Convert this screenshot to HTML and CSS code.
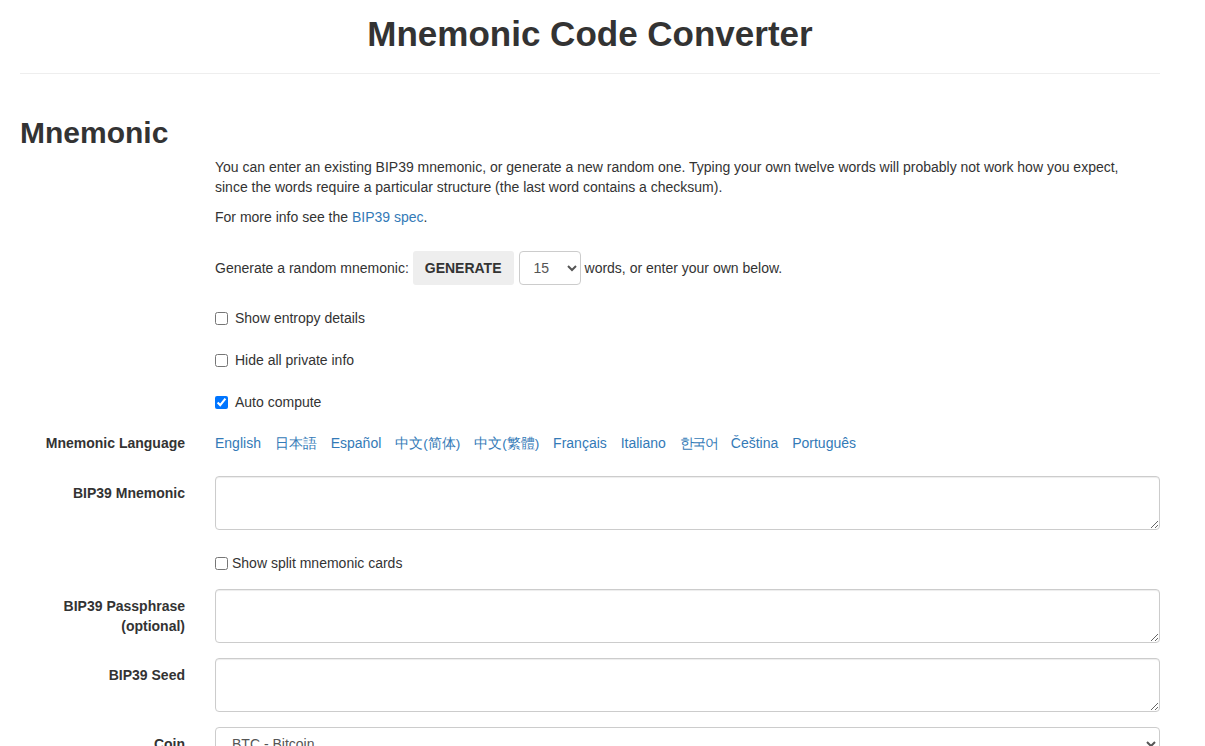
FILE: index.html
```html
<!DOCTYPE html>
<html lang="en">
<head>
  <meta charset="UTF-8" />
  <title>Mnemonic Code Converter</title>
  <link rel="stylesheet" href="styles.css">
</head>
<body>
  <div class="container">
    <h1 class="page-title">Mnemonic Code Converter</h1>
    <hr />

    <h2 class="section-title">Mnemonic</h2>

    <form class="form">
      <div class="row row-intro">
        <div class="col-label"></div>
        <div class="col-field">
          <p class="help">
            You can enter an existing BIP39 mnemonic, or generate a new random one. Typing your own twelve words will probably not work how you expect,<br />
            since the words require a particular structure (the last word contains a checksum).
          </p>
          <p class="help">For more info see the <a href="#">BIP39 spec</a>.</p>
        </div>
      </div>

      <div class="row row-generate">
        <div class="col-label"></div>
        <div class="col-field inline">
          <span>Generate a random mnemonic:</span>
          <button type="button" class="btn-generate">GENERATE</button>
          <select class="strength">
            <option>3</option>
            <option>6</option>
            <option>9</option>
            <option>12</option>
            <option selected>15</option>
            <option>18</option>
            <option>21</option>
            <option>24</option>
          </select>
          <span>words, or enter your own below.</span>
        </div>
      </div>

      <div class="row row-check first">
        <div class="col-label"></div>
        <label class="col-field check"><input type="checkbox" /> Show entropy details</label>
      </div>
      <div class="row row-check">
        <div class="col-label"></div>
        <label class="col-field check"><input type="checkbox" /> Hide all private info</label>
      </div>
      <div class="row row-check">
        <div class="col-label"></div>
        <label class="col-field check"><input type="checkbox" checked /> Auto compute</label>
      </div>

      <div class="row row-lang">
        <div class="col-label label">Mnemonic Language</div>
        <div class="col-field languages">
          <a href="#">English</a>
          <a href="#">日本語</a>
          <a href="#">Español</a>
          <a href="#" class="cjk">中文(简体)</a>
          <a href="#" class="cjk">中文(繁體)</a>
          <a href="#">Français</a>
          <a href="#">Italiano</a>
          <a href="#" class="ko">한국어</a>
          <a href="#">Čeština</a>
          <a href="#">Português</a>
        </div>
      </div>

      <div class="row row-field">
        <div class="col-label label padded">BIP39 Mnemonic</div>
        <div class="col-field"><textarea rows="2"></textarea></div>
      </div>

      <div class="row row-split">
        <div class="col-label"></div>
        <label class="col-field check tight"><input type="checkbox" /> Show split mnemonic cards</label>
      </div>

      <div class="row row-field pass">
        <div class="col-label label padded">BIP39 Passphrase (optional)</div>
        <div class="col-field"><textarea rows="2"></textarea></div>
      </div>

      <div class="row row-field">
        <div class="col-label label padded">BIP39 Seed</div>
        <div class="col-field"><textarea rows="2"></textarea></div>
      </div>

      <div class="row row-field">
        <div class="col-label label padded">Coin</div>
        <div class="col-field">
          <select class="coin">
            <option>BTC - Bitcoin</option>
            <option>BTC - Bitcoin Testnet</option>
            <option>ETH - Ethereum</option>
          </select>
        </div>
      </div>
    </form>
  </div>
</body>
</html>
```

FILE: styles.css
```css
body {
  margin: 0;
  font-family: 'Liberation Sans', Arial, sans-serif;
  font-size: 14px;
  line-height: 20px;
  color: #333;
  background: #fff;
}

a {
  color: #337ab7;
  text-decoration: none;
}

.container {
  width: 1140px;
  margin-left: 20px;
}

.page-title {
  margin: 14px 0 0;
  font-size: 35px;
  line-height: 40px;
  font-weight: 700;
  text-align: center;
}

hr {
  margin: 19px 0 0;
  border: 0;
  border-top: 1px solid #eee;
}

.section-title {
  margin: 42px 0 0;
  font-size: 30px;
  line-height: 33px;
  font-weight: 700;
}

.form {
  display: flex;
  flex-direction: column;
}

.row {
  display: flex;
}

.col-label {
  width: 165px;
  flex: none;
  margin-right: 30px;
  text-align: right;
}

.col-field {
  flex: 1;
  min-width: 0;
}

.label {
  font-weight: 700;
}

.padded {
  padding-top: 7px;
}

.help {
  margin: 0 0 10px;
}

.row-intro {
  margin-top: 8px;
}

.row-generate {
  margin-top: 14px;
}

.inline {
  display: flex;
  align-items: center;
  white-space: nowrap;
}

.btn-generate {
  margin: 0 4px 0 4px;
  height: 34px;
  padding: 0 12px;
  border: none;
  border-radius: 3px;
  background: #eee;
  color: #333;
  font-family: inherit;
  font-size: 14px;
  font-weight: 700;
}

.strength {
  width: 62px;
  height: 34px;
  margin-left: 1px;
  margin-right: 4px;
  padding: 0 8px 0 10px;
  border: 1px solid #ccc;
  border-radius: 4px;
  background: #fff;
  color: #555;
  font-family: inherit;
  font-size: 14px;
}

.check {
  display: flex;
  align-items: center;
}

.check input {
  width: 13px;
  height: 13px;
  margin: 0 7px 0 0;
}

.check.tight input {
  margin-right: 4px;
}

.row-check {
  margin-top: 22px;
}

.row-check.first {
  margin-top: 23px;
}

.row-lang {
  margin-top: 21px;
}

.languages a {
  margin-right: 10px;
}

.languages .cjk {
  font-size: 13.6px;
}

.languages .ko {
  letter-spacing: -1.6px;
}

.row-field {
  margin-top: 15px;
}

.row-lang + .row-field {
  margin-top: 22px;
}

.row-split {
  margin-top: 23px;
}

.row-field.pass {
  margin-top: 16px;
}

textarea {
  display: block;
  width: 100%;
  box-sizing: border-box;
  height: 54px;
  padding: 6px 12px;
  border: 1px solid #ccc;
  border-radius: 4px;
  box-shadow: inset 0 1px 1px rgba(0, 0, 0, .075);
  font-family: inherit;
  font-size: 14px;
  line-height: 20px;
  color: #555;
}

.coin {
  display: block;
  width: 100%;
  height: 34px;
  padding: 6px 12px;
  border: 1px solid #ccc;
  border-radius: 4px;
  background: #fff;
  color: #555;
  font-family: inherit;
  font-size: 14px;
}
```
